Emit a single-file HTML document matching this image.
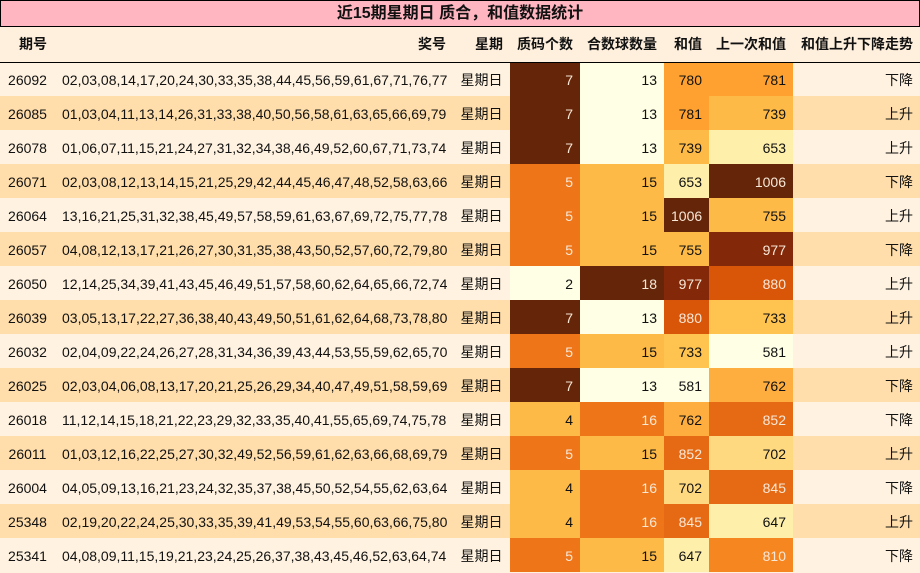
<!DOCTYPE html>
<html><head><meta charset="utf-8"><style>
*{margin:0;padding:0;box-sizing:border-box}
body{width:920px;height:573px;background:#fff2e0;font-family:"Liberation Sans","Noto Sans CJK SC",sans-serif;font-size:14px;color:#111;overflow:hidden}
.title{height:27px;background:#ffb6c1;border:1px solid #000;text-align:center;font-weight:bold;font-size:16px;line-height:25px}
table{border-collapse:collapse;table-layout:fixed;width:920px}
th{height:35px;font-weight:bold;font-size:14px;background:#fff0dd;border-bottom:1px solid #000;padding:0 7px;text-align:right;white-space:nowrap}
td{height:34px;padding:1px 7px 0;text-align:right;white-space:nowrap}
tr.e td{background:#ffdeab}
tr.o td{background:#fff2e0}
td.c{text-align:center}
tr td.D{background:#652508;color:#f8e8d8}
tr td.B{background:#83290a;color:#f8e8d8}
tr td.R{background:#d95508;color:#f8e8d8}
tr td.R2{background:#e66a14;color:#f8e8d8}
tr td.O{background:#ee7619;color:#f8e8d8}
tr td.F{background:#f6861f;color:#f8e8d8}
tr td.A{background:#fea130}
tr td.A2{background:#feae3f}
tr td.Y{background:#fdba47}
tr td.Y2{background:#fec44f}
tr td.K{background:#fed97f}
tr td.P{background:#fef0ab}
tr td.L{background:#ffffe5}
</style></head><body>
<div class="title">近15期星期日 质合，和值数据统计</div>
<table>
<colgroup><col style="width:55px"><col style="width:398px"><col style="width:57px"><col style="width:70px"><col style="width:84px"><col style="width:45px"><col style="width:84px"><col style="width:127px"></colgroup>
<tr><th style="text-align:left;padding-left:19px">期号</th><th>奖号</th><th>星期</th><th>质码个数</th><th>合数球数量</th><th>和值</th><th>上一次和值</th><th>和值上升下降走势</th></tr>
<tr class="o"><td class="c">26092</td><td>02,03,08,14,17,20,24,30,33,35,38,44,45,56,59,61,67,71,76,77</td><td class="c">星期日</td><td class="D">7</td><td class="L">13</td><td class="A">780</td><td class="A">781</td><td>下降</td></tr>
<tr class="e"><td class="c">26085</td><td>01,03,04,11,13,14,26,31,33,38,40,50,56,58,61,63,65,66,69,79</td><td class="c">星期日</td><td class="D">7</td><td class="L">13</td><td class="A">781</td><td class="Y">739</td><td>上升</td></tr>
<tr class="o"><td class="c">26078</td><td>01,06,07,11,15,21,24,27,31,32,34,38,46,49,52,60,67,71,73,74</td><td class="c">星期日</td><td class="D">7</td><td class="L">13</td><td class="Y">739</td><td class="P">653</td><td>上升</td></tr>
<tr class="e"><td class="c">26071</td><td>02,03,08,12,13,14,15,21,25,29,42,44,45,46,47,48,52,58,63,66</td><td class="c">星期日</td><td class="O">5</td><td class="Y">15</td><td class="P">653</td><td class="D">1006</td><td>下降</td></tr>
<tr class="o"><td class="c">26064</td><td>13,16,21,25,31,32,38,45,49,57,58,59,61,63,67,69,72,75,77,78</td><td class="c">星期日</td><td class="O">5</td><td class="Y">15</td><td class="D">1006</td><td class="Y">755</td><td>上升</td></tr>
<tr class="e"><td class="c">26057</td><td>04,08,12,13,17,21,26,27,30,31,35,38,43,50,52,57,60,72,79,80</td><td class="c">星期日</td><td class="O">5</td><td class="Y">15</td><td class="Y">755</td><td class="B">977</td><td>下降</td></tr>
<tr class="o"><td class="c">26050</td><td>12,14,25,34,39,41,43,45,46,49,51,57,58,60,62,64,65,66,72,74</td><td class="c">星期日</td><td class="L">2</td><td class="D">18</td><td class="B">977</td><td class="R">880</td><td>上升</td></tr>
<tr class="e"><td class="c">26039</td><td>03,05,13,17,22,27,36,38,40,43,49,50,51,61,62,64,68,73,78,80</td><td class="c">星期日</td><td class="D">7</td><td class="L">13</td><td class="R">880</td><td class="Y2">733</td><td>上升</td></tr>
<tr class="o"><td class="c">26032</td><td>02,04,09,22,24,26,27,28,31,34,36,39,43,44,53,55,59,62,65,70</td><td class="c">星期日</td><td class="O">5</td><td class="Y">15</td><td class="Y2">733</td><td class="L">581</td><td>上升</td></tr>
<tr class="e"><td class="c">26025</td><td>02,03,04,06,08,13,17,20,21,25,26,29,34,40,47,49,51,58,59,69</td><td class="c">星期日</td><td class="D">7</td><td class="L">13</td><td class="L">581</td><td class="A2">762</td><td>下降</td></tr>
<tr class="o"><td class="c">26018</td><td>11,12,14,15,18,21,22,23,29,32,33,35,40,41,55,65,69,74,75,78</td><td class="c">星期日</td><td class="Y">4</td><td class="O">16</td><td class="A2">762</td><td class="R2">852</td><td>下降</td></tr>
<tr class="e"><td class="c">26011</td><td>01,03,12,16,22,25,27,30,32,49,52,56,59,61,62,63,66,68,69,79</td><td class="c">星期日</td><td class="O">5</td><td class="Y">15</td><td class="R2">852</td><td class="K">702</td><td>上升</td></tr>
<tr class="o"><td class="c">26004</td><td>04,05,09,13,16,21,23,24,32,35,37,38,45,50,52,54,55,62,63,64</td><td class="c">星期日</td><td class="Y">4</td><td class="O">16</td><td class="K">702</td><td class="R2">845</td><td>下降</td></tr>
<tr class="e"><td class="c">25348</td><td>02,19,20,22,24,25,30,33,35,39,41,49,53,54,55,60,63,66,75,80</td><td class="c">星期日</td><td class="Y">4</td><td class="O">16</td><td class="R2">845</td><td class="P">647</td><td>上升</td></tr>
<tr class="o"><td class="c">25341</td><td>04,08,09,11,15,19,21,23,24,25,26,37,38,43,45,46,52,63,64,74</td><td class="c">星期日</td><td class="O">5</td><td class="Y">15</td><td class="P">647</td><td class="F">810</td><td>下降</td></tr>
</table>
</body></html>
